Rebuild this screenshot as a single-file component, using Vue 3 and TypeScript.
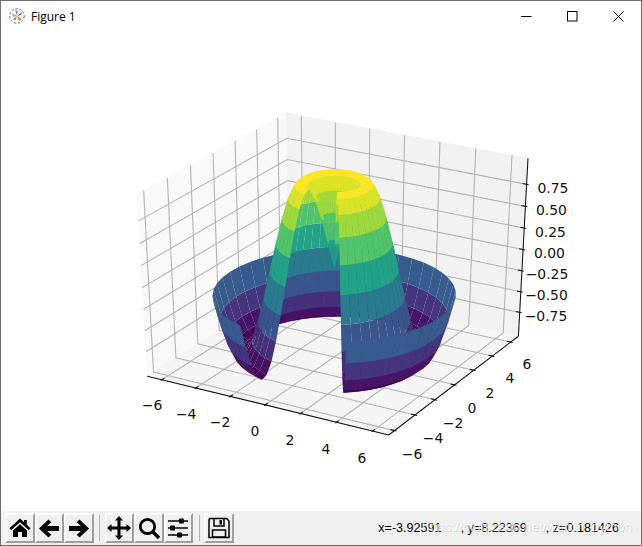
<template>
  <div class="window">
    <div class="titlebar">
      <svg class="app-icon" viewBox="0 0 16 16" width="16" height="16">
        <circle cx="8" cy="8" r="7.2" fill="none" stroke="#2b6f9e" stroke-width="1" stroke-dasharray="2.4 1.6" />
        <path d="M8 8 L3 5 L4 9 Z" fill="#f0a040" />
        <path d="M8 8 L6 2 L9 3 Z" fill="#6a9cc0" />
        <path d="M8 8 L13 4 L12 7 Z" fill="#5a5a5a" />
        <path d="M8 8 L13 11 L10 13 Z" fill="#e07a40" />
        <path d="M8 8 L6 13 L4 11 Z" fill="#8a8a8a" />
      </svg>
      <span class="title-text">Figure 1</span>
      <div class="window-controls">
        <svg viewBox="0 0 11 11" width="11" height="11"><path d="M0 5.5H10.5" stroke="#000" fill="none" /></svg>
        <svg viewBox="0 0 11 11" width="11" height="11"><rect x="0.5" y="0.5" width="9.5" height="9.5" stroke="#000" fill="none" /></svg>
        <svg viewBox="0 0 11 11" width="11" height="11"><path d="M0.5 0.5L10.5 10.5M10.5 0.5L0.5 10.5" stroke="#000" fill="none" /></svg>
      </div>
    </div>

    <svg class="figure" viewBox="1 31 640 480" width="640" height="480">
      <polygon v-for="p in panes" :key="p.fill" :points="p.points" :fill="p.fill" :stroke="p.fill" />
      <polyline
        v-for="(g, i) in gridLines"
        :key="'g' + i"
        :points="g"
        fill="none"
        stroke="#b4b4b4"
        stroke-width="1.1"
      />
      <line
        v-for="(a, i) in axisLines"
        :key="'a' + i"
        :x1="a.x1"
        :y1="a.y1"
        :x2="a.x2"
        :y2="a.y2"
        stroke="#111"
        stroke-width="1.05"
      />
      <polygon v-for="(c, i) in cells" :key="'c' + i" :points="c.points" :fill="c.fill" />
      <text
        v-for="t in labels"
        :key="t.text + t.x"
        :x="t.x"
        :y="t.y"
        class="tick-label"
        text-anchor="middle"
        dominant-baseline="central"
      >{{ t.text }}</text>
    </svg>

    <div class="toolbar">
      <button class="tool"><svg viewBox="0 0 24 24" width="24" height="24"><path d="M12 2.5L1.5 12.2 3.2 14 12 6.2 20.8 14 22.5 12.2 18.8 8.8V4H16V6.3ZM12 8.2L5 14.4V21H10V16H14V21H19V14.4Z" /></svg></button>
      <button class="tool"><svg viewBox="0 0 24 24" width="24" height="24"><path d="M11.5 3.5L14.3 6.3 10 10H22V15H10L14.3 18.7 11.5 21.5 2 12.5Z" /></svg></button>
      <button class="tool"><svg viewBox="0 0 24 24" width="24" height="24"><path d="M12.5 3.5L9.7 6.3 14 10H2V15H14L9.7 18.7 12.5 21.5 22 12.5Z" /></svg></button>
      <span class="sep"></span>
      <button class="tool"><svg viewBox="0 0 24 24" width="24" height="24"><path d="M12 0L16 4.5H13.5V10.5H19.5V8L24 12 19.5 16V13.5H13.5V19.5H16L12 24 8 19.5H10.5V13.5H4.5V16L0 12 4.5 8V10.5H10.5V4.5H8Z" /></svg></button>
      <button class="tool"><svg viewBox="0 0 24 24" width="24" height="24"><circle cx="10.5" cy="10.5" r="7.2" fill="none" stroke="#000" stroke-width="2.8" /><path d="M15.5 15.5L22 22" stroke="#000" stroke-width="3.4" fill="none" /></svg></button>
      <button class="tool"><svg viewBox="0 0 24 24" width="24" height="24"><path d="M2 5H22M2 12H22M2 19H22" stroke="#000" stroke-width="1.4" fill="none" /><rect x="13" y="2.5" width="5" height="5" rx="1" /><rect x="4" y="9.5" width="5" height="5" rx="1" /><rect x="11" y="16.5" width="5" height="5" rx="1" /></svg></button>
      <span class="sep"></span>
      <button class="tool"><svg viewBox="0 0 24 24" width="24" height="24"><path d="M3 2.5H19.5L22 5V21.5H2V3.5Z" fill="none" stroke="#000" stroke-width="1.5" /><path d="M7 3V10H17V3" fill="none" stroke="#000" stroke-width="1.5" /><rect x="12.5" y="4" width="2.4" height="4.5" /><rect x="5.5" y="14" width="13" height="7" fill="none" stroke="#000" stroke-width="1.5" /></svg></button>
      <div class="status">
        <span>x=-3.92591</span>
        <span>, y=8.22369</span>
        <span>, z=0.181426</span>
      </div>
      <span class="watermark">https://blog.csdn.net/weixin_python</span>
    </div>
  </div>
</template>

<script setup lang="ts">
type Vec = [number, number, number];

// same view as mplot3d defaults: elev 30, azim -60, dist 10
const elev = (30 * Math.PI) / 180;
const azim = (-60 * Math.PI) / 180;
const dist = 10;

const xlim = [-6.6, 6.6];
const ylim = [-6.285, 6.585];
const zlim = [-1.0, 1.0];
const pad = (l: number[]) => (l[1] - l[0]) / 48;
const xp = [xlim[0] - pad(xlim), xlim[1] + pad(xlim)];
const yp = [ylim[0] - pad(ylim), ylim[1] + pad(ylim)];
const zp = [zlim[0] - pad(zlim), zlim[1] + pad(zlim)];

const dot = (a: Vec, b: Vec) => a[0] * b[0] + a[1] * b[1] + a[2] * b[2];
const cross = (a: Vec, b: Vec): Vec => [
  a[1] * b[2] - a[2] * b[1],
  a[2] * b[0] - a[0] * b[2],
  a[0] * b[1] - a[1] * b[0],
];

const w: Vec = [Math.cos(azim) * Math.cos(elev), Math.sin(azim) * Math.cos(elev), Math.sin(elev)];
const eye: Vec = [0.5 + dist * w[0], 0.5 + dist * w[1], 0.5 + dist * w[2]];
const uRaw = cross([0, 0, 1], w);
const uLen = Math.hypot(...uRaw);
const u: Vec = [uRaw[0] / uLen, uRaw[1] / uLen, uRaw[2] / uLen];
const v = cross(w, u);

function camera(x: number, y: number, z: number) {
  const p: Vec = [
    (x - xlim[0]) / (xlim[1] - xlim[0]) - eye[0],
    (y - ylim[0]) / (ylim[1] - ylim[0]) - eye[1],
    (z - zlim[0]) / (zlim[1] - zlim[0]) - eye[2],
  ];
  const depth = -dot(p, w);
  return { sx: dot(p, u) / depth, sy: dot(p, v) / depth, depth };
}

// fit the projected box on the corners measured from the figure
const topLeft = camera(xp[0], yp[0], zp[1]);
const topRight = camera(xp[1], yp[1], zp[1]);
const front = camera(xp[1], yp[0], zp[0]);
const back = camera(xp[0], yp[1], zp[1]);
const scaleX = (528 - 137) / (topRight.sx - topLeft.sx);
const scaleY = (435 - 113) / (back.sy - front.sy);

function project(x: number, y: number, z: number) {
  const c = camera(x, y, z);
  return {
    x: +(137 + (c.sx - topLeft.sx) * scaleX).toFixed(2),
    y: +(113 + (back.sy - c.sy) * scaleY).toFixed(2),
    depth: c.depth,
  };
}

const toPoints = (pts: Vec[]) =>
  pts
    .map((p) => {
      const s = project(p[0], p[1], p[2]);
      return `${s.x},${s.y}`;
    })
    .join(' ');

const panes = [
  { fill: '#f9f9f9', points: toPoints([[xp[0], yp[0], zp[0]], [xp[0], yp[1], zp[0]], [xp[0], yp[1], zp[1]], [xp[0], yp[0], zp[1]]]) },
  { fill: '#f2f2f2', points: toPoints([[xp[0], yp[1], zp[0]], [xp[1], yp[1], zp[0]], [xp[1], yp[1], zp[1]], [xp[0], yp[1], zp[1]]]) },
  { fill: '#f5f5f5', points: toPoints([[xp[0], yp[0], zp[0]], [xp[1], yp[0], zp[0]], [xp[1], yp[1], zp[0]], [xp[0], yp[1], zp[0]]]) },
];

const xyTicks = [-6, -4, -2, 0, 2, 4, 6];
const zTicks = [-0.75, -0.5, -0.25, 0, 0.25, 0.5, 0.75];

const gridLines = [
  ...xyTicks.map((t) => toPoints([[t, yp[0], zp[0]], [t, yp[1], zp[0]], [t, yp[1], zp[1]]])),
  ...xyTicks.map((t) => toPoints([[xp[1], t, zp[0]], [xp[0], t, zp[0]], [xp[0], t, zp[1]]])),
  ...zTicks.map((t) => toPoints([[xp[0], yp[0], t], [xp[0], yp[1], t], [xp[1], yp[1], t]])),
];

function segment(a: Vec, b: Vec) {
  const s = project(a[0], a[1], a[2]);
  const e = project(b[0], b[1], b[2]);
  return { x1: s.x, y1: s.y, x2: e.x, y2: e.y };
}

const xStep = 1.1;
const yStep = (ylim[1] - ylim[0]) / 12;
const zStep = xStep;

const axisLines = [
  segment([xp[0], yp[0], zp[0]], [xp[1], yp[0], zp[0]]),
  segment([xp[1], yp[0], zp[0]], [xp[1], yp[1], zp[0]]),
  segment([xp[1], yp[1], zp[0]], [xp[1], yp[1], zp[1]]),
  ...xyTicks.map((t) => segment([t, yp[0] - 0.1 * yStep, zp[0]], [t, yp[0] + 0.2 * yStep, zp[0]])),
  ...xyTicks.map((t) => segment([xp[1] + 0.1 * xStep, t, zp[0]], [xp[1] - 0.2 * xStep, t, zp[0]])),
  ...zTicks.map((t) => segment([xp[1] + 0.1 * zStep, yp[1], t], [xp[1] - 0.2 * zStep, yp[1], t])),
];

const viridis = [
  [68, 1, 84], [72, 36, 117], [65, 68, 135], [53, 95, 141], [42, 120, 142],
  [33, 145, 140], [34, 168, 132], [68, 191, 112], [122, 209, 81], [189, 223, 38], [253, 231, 37],
];

function colorAt(t: number) {
  const pos = Math.min(Math.max(t, 0), 1) * (viridis.length - 1);
  const i = Math.min(Math.floor(pos), viridis.length - 2);
  const f = pos - i;
  const rgb = viridis[i].map((c, k) => Math.round(c + (viridis[i + 1][k] - c) * f));
  return `rgb(${rgb.join(',')})`;
}

// the surface: z = sin(r) over a ring with a wedge cut out
const rCount = 20;
const thetaCount = 40;

function surfacePoint(i: number, j: number): Vec {
  const r = (6 * i) / (rCount - 1);
  const th = -0.9 * Math.PI + (1.7 * Math.PI * j) / (thetaCount - 1);
  return [r * Math.sin(th), r * Math.cos(th), Math.sin(r)];
}

const rawCells: { pts: Vec[]; z: number; depth: number }[] = [];
for (let i = 0; i < rCount - 1; i++) {
  for (let j = 0; j < thetaCount - 1; j++) {
    const pts = [surfacePoint(i, j), surfacePoint(i + 1, j), surfacePoint(i + 1, j + 1), surfacePoint(i, j + 1)];
    rawCells.push({
      pts,
      z: pts.reduce((s, p) => s + p[2], 0) / 4,
      depth: pts.reduce((s, p) => s + project(p[0], p[1], p[2]).depth, 0) / 4,
    });
  }
}
const zMin = Math.min(...rawCells.map((c) => c.z));
const zMax = Math.max(...rawCells.map((c) => c.z));
const cells = rawCells
  .sort((a, b) => b.depth - a.depth)
  .map((c) => ({ points: toPoints(c.pts), fill: colorAt((c.z - zMin) / (zMax - zMin)) }));

const labels = [
  { text: '−6', x: 152, y: 405 },
  { text: '−4', x: 186, y: 414 },
  { text: '−2', x: 220, y: 422 },
  { text: '0', x: 255, y: 431 },
  { text: '2', x: 290, y: 440 },
  { text: '4', x: 326, y: 449 },
  { text: '6', x: 362, y: 458 },
  { text: '6', x: 527, y: 364 },
  { text: '4', x: 510, y: 378 },
  { text: '2', x: 490, y: 393 },
  { text: '0', x: 472, y: 408 },
  { text: '−2', x: 453, y: 423 },
  { text: '−4', x: 433, y: 438 },
  { text: '−6', x: 412, y: 454 },
  { text: '0.75', x: 553, y: 188 },
  { text: '0.50', x: 551.5, y: 210 },
  { text: '0.25', x: 550.5, y: 232 },
  { text: '0.00', x: 549.5, y: 253 },
  { text: '−0.25', x: 547, y: 274 },
  { text: '−0.50', x: 546.5, y: 295 },
  { text: '−0.75', x: 546, y: 316 },
];
</script>

<style scoped>
.window {
  width: 642px;
  height: 546px;
  box-sizing: border-box;
  border: 1px solid #6e6e6e;
  background: #fff;
  display: flex;
  flex-direction: column;
  overflow: hidden;
}

.titlebar {
  height: 30px;
  flex: none;
  display: flex;
  align-items: center;
  padding-left: 8px;
}

.app-icon {
  flex: none;
}

.title-text {
  margin-left: 6px;
  font: 12px "Open Sans", "Liberation Sans", sans-serif;
  color: #000;
}

.window-controls {
  margin-left: auto;
  display: flex;
  gap: 35px;
  padding-right: 17px;
}

.figure {
  flex: none;
  display: block;
}

.tick-label {
  font: 13.9px "DejaVu Sans", sans-serif;
  fill: #111;
}

.toolbar {
  flex: 1;
  position: relative;
  display: flex;
  align-items: center;
  background: #f0f0f0;
  padding-left: 4px;
  min-height: 0;
}

.tool {
  width: 29.5px;
  height: 30px;
  box-sizing: border-box;
  padding: 0;
  background: #f0f0f0;
  border: 2px solid;
  border-color: #fbfbfb #9f9f9f #9f9f9f #fbfbfb;
  display: flex;
  align-items: center;
  justify-content: center;
  flex: none;
}

.sep {
  width: 1px;
  height: 26px;
  margin: 0 4.5px 0 5.5px;
  background: #b0b0b0;
  flex: none;
}

.status {
  margin-left: auto;
  padding-right: 22px;
  display: flex;
  gap: 19px;
  font: 12.6px "Liberation Sans", Arial, sans-serif;
  color: #000;
  white-space: nowrap;
}

/* image host's stamp lying over the status text */
.watermark {
  position: absolute;
  right: 9px;
  top: 8px;
  font: 13.5px "Liberation Sans", Arial, sans-serif;
  color: rgba(255, 255, 255, 0.7);
  text-shadow: 1px 1px 0 rgba(150, 150, 150, 0.3);
  white-space: nowrap;
}
</style>
